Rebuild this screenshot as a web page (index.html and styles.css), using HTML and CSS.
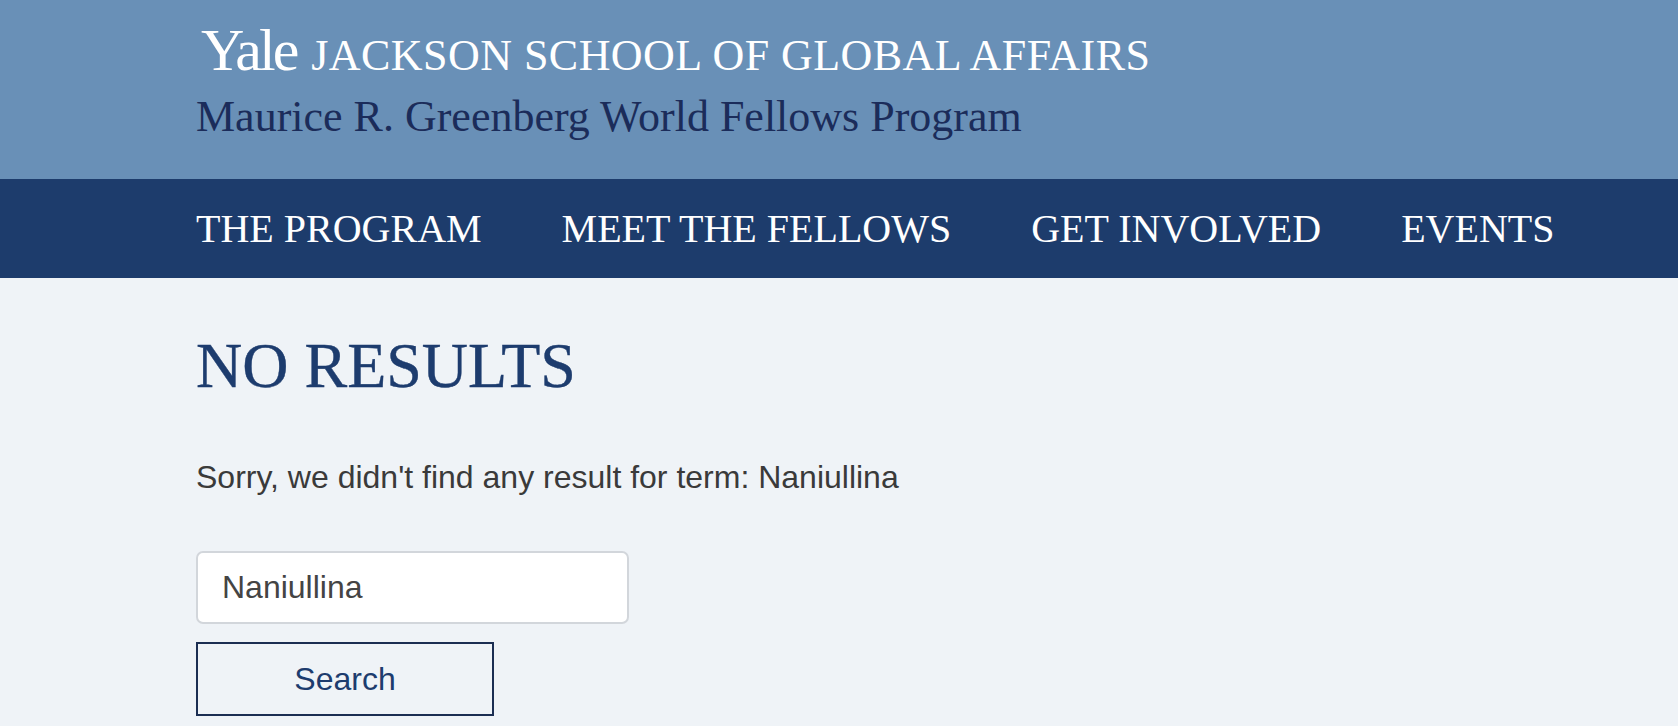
FILE: index.html
```html
<!DOCTYPE html>
<html lang="en">
<head>
<meta charset="utf-8">
<title>No Results | Maurice R. Greenberg World Fellows Program</title>
<link rel="stylesheet" href="styles.css">
</head>
<body>
<header class="site-header">
  <div class="brand-line"><span class="brand-yale">Yale</span> <span class="brand-school">JACKSON SCHOOL OF GLOBAL AFFAIRS</span></div>
  <div class="brand-program">Maurice R. Greenberg World Fellows Program</div>
</header>
<nav class="main-nav">
  <a class="nav-item" href="#">THE PROGRAM</a>
  <a class="nav-item" href="#">MEET THE FELLOWS</a>
  <a class="nav-item" href="#">GET INVOLVED</a>
  <a class="nav-item" href="#">EVENTS</a>
</nav>
<main class="content">
  <h1 class="page-title">NO RESULTS</h1>
  <p class="message">Sorry, we didn't find any result for term: Naniullina</p>
  <form class="search-form">
    <input class="search-input" type="text" value="Naniullina">
    <button class="search-button" type="button">Search</button>
  </form>
</main>
</body>
</html>
```
FILE: styles.css
```css
html, body {
  margin: 0;
  padding: 0;
}
body {
  background: #eff3f7;
  font-family: "Liberation Serif", "Times New Roman", serif;
  min-height: 726px;
}
.site-header {
  box-sizing: border-box;
  height: 179px;
  background: #6990b7;
  padding: 20px 0 0 196px;
}
.brand-line {
  font-size: 60px;
  line-height: 60px;
  color: #ffffff;
  white-space: nowrap;
}
.brand-yale {
  letter-spacing: -3px;
  margin-left: 5px;
}
.brand-school {
  font-size: 44px;
  letter-spacing: 0.45px;
}
.brand-program {
  margin-top: 6px;
  font-size: 44px;
  line-height: 50px;
  color: #1b2c5a;
  white-space: nowrap;
}
.main-nav {
  box-sizing: border-box;
  height: 99px;
  background: #1d3c6c;
  display: flex;
  align-items: center;
  gap: 80px;
  padding: 1px 0 0 196px;
}
.nav-item {
  font-size: 40px;
  line-height: 40px;
  color: #ffffff;
  text-decoration: none;
  white-space: nowrap;
}
.content {
  padding: 53px 0 0 196px;
}
.page-title {
  margin: 0;
  font-size: 64px;
  line-height: 70px;
  font-weight: normal;
  color: #1d3c6e;
  -webkit-text-stroke: 0.4px #1d3c6e;
}
.message {
  margin: 56px 0 0;
  font-family: "Liberation Sans", Arial, sans-serif;
  font-size: 32px;
  line-height: 40px;
  color: #3a3a3a;
}
.search-form {
  margin-top: 54px;
  display: flex;
  flex-direction: column;
  align-items: flex-start;
  gap: 18px;
}
.search-input {
  box-sizing: border-box;
  width: 433px;
  height: 73px;
  margin: 0;
  padding: 0 0 0 24px;
  border: 2px solid #d2d6db;
  border-radius: 7px;
  background: #ffffff;
  font-family: "Liberation Sans", Arial, sans-serif;
  font-size: 32px;
  color: #444444;
  outline: none;
}
.search-button {
  box-sizing: border-box;
  width: 298px;
  height: 74px;
  margin: 0;
  padding: 0;
  border: 2px solid #1b2e52;
  border-radius: 0;
  background: transparent;
  font-family: "Liberation Sans", Arial, sans-serif;
  font-size: 32px;
  color: #1d3c6e;
  cursor: pointer;
}
```
